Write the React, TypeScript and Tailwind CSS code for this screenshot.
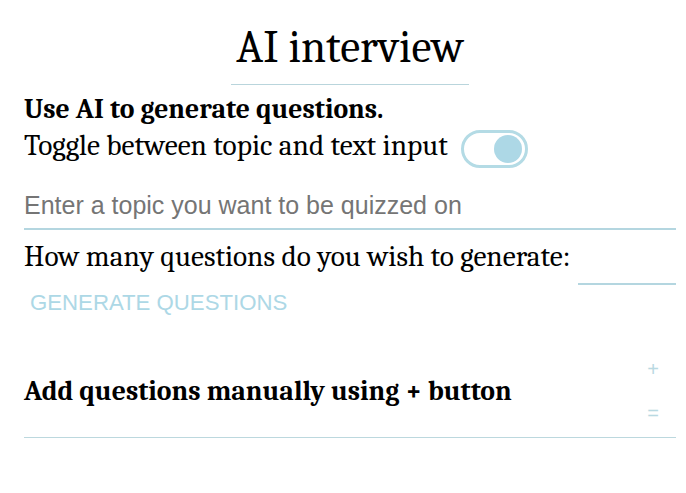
import React from "react";

export default function App() {
  return (
    <div className="w-[686px] h-[493px] bg-white overflow-hidden pl-[24px] pr-[10px] pt-[22px] font-[Caladea,Cambria,serif] text-black">
      <div className="flex justify-center">
        <h1 className="inline-block px-[5px] pb-[12px] border-b border-[#b9d5dc] text-[45px] leading-[50px] font-normal">
          AI interview
        </h1>
      </div>
      <div className="mt-[8px] text-[27.7px] leading-[32px] font-bold">Use AI to generate questions.</div>
      <div className="flex items-start mt-[4px]">
        <span className="text-[29.3px] leading-[34px] whitespace-nowrap">Toggle between topic and text input</span>
        <div className="ml-[13px] mt-[1px] w-[67px] h-[38px] rounded-full border-[3px] border-[#b4dbe5] flex items-center justify-end pr-[3px]">
          <div className="w-[28px] h-[28px] rounded-full bg-[#add8e6]" />
        </div>
      </div>
      <div className="mt-[23px] border-b-2 border-[#b4d6e0] pb-[9px]">
        <div className="text-[25px] leading-[28px] text-[#757575] font-['Liberation_Sans',Arial,sans-serif]">
          Enter a topic you want to be quizzed on
        </div>
      </div>
      <div className="flex items-start mt-[10px]">
        <span className="text-[29.3px] leading-[34px] whitespace-nowrap">How many questions do you wish to generate:</span>
        <div className="ml-auto mt-[43px] w-[98px] border-b-2 border-[#b4d6e0]" />
      </div>
      <div className="mt-[4px] pl-[6px] text-[22.2px] leading-[28px] text-[#add8e6] uppercase font-['Liberation_Sans',Arial,sans-serif]">
        Generate questions
      </div>
      <div className="mt-[40px] flex items-center border-b border-[#bcd8de] pb-[12px]">
        <span className="text-[27.7px] leading-[32px] font-bold whitespace-nowrap">Add questions manually using + button</span>
        <div className="ml-auto mr-[17px] flex flex-col items-center gap-[20px] text-[#b9d9e2] text-[20px] leading-[24px] font-['Liberation_Sans',Arial,sans-serif]">
          <span>+</span>
          <span>=</span>
        </div>
      </div>
    </div>
  );
}
